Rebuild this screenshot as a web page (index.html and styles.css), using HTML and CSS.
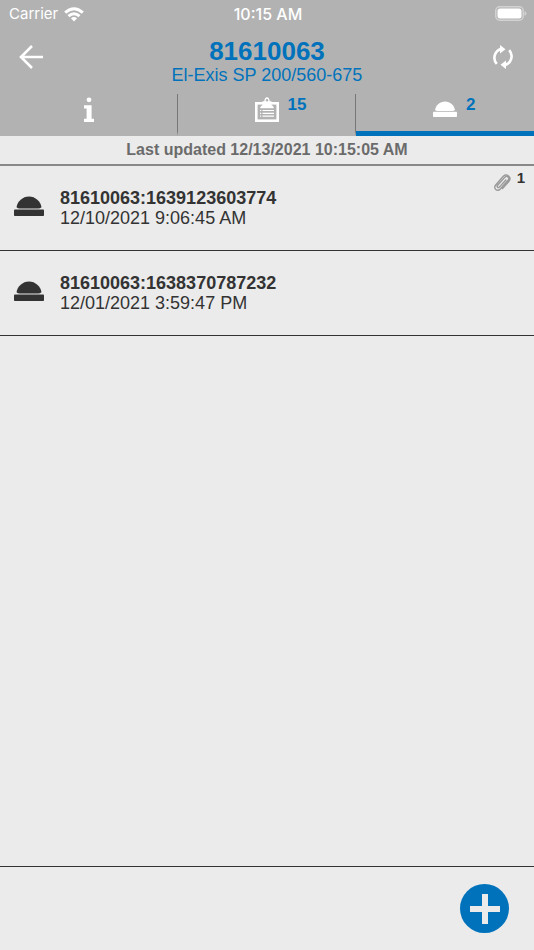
FILE: index.html
```html
<!DOCTYPE html>
<html lang="en">
<head>
<meta charset="utf-8">
<meta name="viewport" content="width=device-width, initial-scale=1">
<title>81610063</title>
<link rel="stylesheet" href="styles.css">
</head>
<body>
<svg class="defs" aria-hidden="true">
  <symbol id="bell" viewBox="0 0 30 20">
    <path d="M2.500 11.200C3.500 5.500 8.500.5 15 .5s11.500 5 12.500 10.700q-1.500 1.300-3 1.300H5.500q-1.500 0-3-1.300z"/>
    <rect x="0" y="13.500" width="30" height="6.500" rx="0.800"/>
  </symbol>
</svg>
<div class="app">
  <header class="header">
    <div class="status">
      <span class="carrier">Carrier
        <svg class="wifi" viewBox="0 0 20 15" aria-hidden="true">
          <g fill="none" stroke="currentColor" stroke-width="3">
            <path d="M1.200 5.700Q10-2.200 18.800 5.700"/>
            <path d="M4.500 9.200Q10 4.400 15.500 9.200"/>
          </g>
          <path d="M6.900 11.300Q10 8.800 13.100 11.300L10 14.400z" fill="currentColor"/>
        </svg>
      </span>
      <span class="clock">10:15 AM</span>
      <svg class="battery" viewBox="0 0 32 16" aria-hidden="true">
        <rect x="0.750" y="0.750" width="27.500" height="13.500" rx="4" fill="none" stroke="#d2d2d2" stroke-width="1.500"/>
        <rect x="2.500" y="2.500" width="24" height="10" rx="2.500" fill="#fff"/>
        <path d="M29.500 5.200q2 .6 2 2.300t-2 2.300z" fill="#d2d2d2"/>
      </svg>
    </div>
    <div class="titlebar">
      <button class="icon-button" type="button" aria-label="Back">
        <svg class="back" viewBox="0 0 24 24" fill="none" stroke="currentColor" stroke-width="2.600" aria-hidden="true"><path d="M24 12H2M13 1L2 12l11 11"/></svg>
      </button>
      <div class="titles">
        <h1>81610063</h1>
        <p>El-Exis SP 200/560-675</p>
      </div>
      <button class="icon-button" type="button" aria-label="Refresh">
        <svg class="refresh" viewBox="0 0 22 24" aria-hidden="true">
          <g fill="none" stroke="currentColor" stroke-width="2.600">
            <path d="M4.800 18.900A9.200 9.200 0 0 1 10 3.700"/>
            <path d="M17.200 5.100A9.200 9.200 0 0 1 12 20.300"/>
          </g>
          <path d="M8 0l5.500 4.200L8 8.500zM14 24l-5.500-4.200L14 15.500z" fill="currentColor"/>
        </svg>
      </button>
    </div>
    <nav class="tabs">
      <a class="tab" href="#info" aria-label="Info">
        <svg class="info" viewBox="0 0 12 26" fill="currentColor" aria-hidden="true">
          <circle cx="6" cy="2.800" r="2.400"/>
          <path d="M1 8.200h7.600v13.600H11V25H1v-3.200h2.600V11.400H1z"/>
        </svg>
      </a>
      <a class="tab" href="#reports" aria-label="Reports, 15">
        <svg class="clipboard" viewBox="0 0 24 26" aria-hidden="true">
          <rect x="1.300" y="6.300" width="21.400" height="17.400" fill="none" stroke="currentColor" stroke-width="2.600"/>
          <path fill-rule="evenodd" d="M5 11.200q.5-2.500 2.500-3.200V4.200h1.800C9.500 1.500 10.500.3 12 .3s2.500 1.200 2.700 3.900h1.800V8q2 .7 2.500 3.200zM12 1.900a1.300 1.300 0 1 0 0 2.600 1.300 1.300 0 0 0 0-2.600z" fill="currentColor"/>
          <path d="M5 13.500h1.200M7.500 13.500H19M5 16.300h1.200M7.500 16.300H19M5 19.100h1.200M7.500 19.100H19" stroke="currentColor" stroke-width="1.200"/>
        </svg>
        <span class="count">15</span>
      </a>
      <a class="tab active" href="#requests" aria-current="page" aria-label="Requests, 2">
        <svg class="bell-small"><use href="#bell"/></svg>
        <span class="count">2</span>
      </a>
    </nav>
  </header>
  <p class="updated">Last updated 12/13/2021 10:15:05 AM</p>
  <main>
    <ul class="list">
      <li class="row">
        <svg class="bell"><use href="#bell"/></svg>
        <div class="text"><h2>81610063:1639123603774</h2><p>12/10/2021 9:06:45 AM</p></div>
        <div class="attachments">
          <svg class="clip" viewBox="0 0 18 18" fill="none" stroke="currentColor" stroke-width="1.400" stroke-linecap="round" aria-hidden="true">
            <path d="M12.800 6L6.600 12.900c-1.400 1.500-3.300-.1-2-1.700L11.700 3.400c2.300-2.400 5.500.3 3.300 2.900L7.300 15c-3 3.200-7.600-.5-4.600-4L10.300 2.300C13.600-.8 19 3.100 16 7.200L9.500 14.600"/>
          </svg>
          <span>1</span>
        </div>
      </li>
      <li class="row">
        <svg class="bell"><use href="#bell"/></svg>
        <div class="text"><h2>81610063:1638370787232</h2><p>12/01/2021 3:59:47 PM</p></div>
      </li>
    </ul>
  </main>
  <footer class="footer">
    <button class="add" type="button" aria-label="Add">
      <svg viewBox="0 0 30 30" stroke="currentColor" stroke-width="6" aria-hidden="true"><path d="M15 0v30M0 15h30"/></svg>
    </button>
  </footer>
</div>
</body>
</html>
```
FILE: styles.css
```css
* { box-sizing: border-box; }
body, h1, h2, p, ul { margin: 0; padding: 0; }
body {
  background: #ebebeb;
  color: #333;
  font: 18px/20px "Liberation Sans", Arial, sans-serif;
}
svg { display: block; flex: none; }
button {
  display: grid;
  place-items: center;
  padding: 0;
  border: 0;
  background: none;
  color: #fff;
}
.defs { position: absolute; width: 0; height: 0; }
.app { display: flex; flex-direction: column; min-height: 100vh; }

.header { background: #b2b2b2; color: #fff; }
.status {
  display: grid;
  grid-template-columns: 1fr auto 1fr;
  align-items: center;
  height: 28px;
  padding: 0 7px 0 9px;
  font: 15px/20px Inter, sans-serif;
}
.carrier { display: flex; align-items: center; gap: 6px; }
.wifi { width: 20px; height: 15px; }
.clock { font-size: 16px; font-weight: 500; }
.battery { width: 32px; height: 16px; justify-self: end; }

.titlebar {
  display: flex;
  align-items: center;
  justify-content: space-between;
  height: 64px;
  padding: 0 11px;
}
.icon-button { width: 40px; height: 40px; margin-bottom: 6px; }
.back { width: 24px; height: 24px; }
.refresh { width: 22px; height: 24px; }
.titles { padding-top: 2px; color: #0072bc; text-align: center; }
h1 { font-size: 26px; line-height: 28px; }

.tabs { display: grid; grid-template-columns: repeat(3, 1fr); height: 44px; padding-top: 2px; }
.tab {
  display: grid;
  grid-template-columns: 1fr auto 1fr;
  align-items: start;
  column-gap: 9px;
  padding-top: 3px;
  border-right: 1px solid #777;
  border-bottom: 5px solid transparent;
  color: #fff;
  text-decoration: none;
}
.tab svg { grid-column: 2; }
.tab:last-child { border-right: 0; }
.tab.active { border-bottom-color: #0072bc; }
.info { width: 12px; height: 26px; }
.clipboard { width: 24px; height: 26px; }
.bell-small { width: 24px; height: 16px; margin-top: 4px; fill: #fff; }
.count { color: #0072bc; font-size: 17px; line-height: 16px; font-weight: bold; }

.updated {
  padding: 4px 0;
  border-bottom: 2px solid #888;
  color: #6b6b6b;
  font-size: 16px;
  font-weight: bold;
  text-align: center;
}
main { flex: 1; }
.list { list-style: none; }
.row {
  display: flex;
  align-items: center;
  gap: 16px;
  height: 85px;
  padding: 0 9px 0 14px;
  border-bottom: 1px solid #333;
}
.bell { width: 30px; height: 20px; margin-bottom: 5px; fill: #333; }
.text { flex: 1; }
h2 { font-size: 18px; line-height: 20px; }
.attachments {
  display: flex;
  gap: 6px;
  align-self: flex-start;
  padding-top: 4px;
  font-size: 15px;
  line-height: 16px;
  font-weight: bold;
}
.clip { width: 18px; height: 18px; margin-top: 4px; color: #999; }

.footer {
  display: flex;
  align-items: center;
  justify-content: flex-end;
  height: 84px;
  padding-right: 25px;
  border-top: 1px solid #333;
}
.add { width: 49px; height: 49px; border-radius: 50%; background: #0072bc; color: #ebebeb; }
.add svg { width: 30px; height: 30px; }
```
